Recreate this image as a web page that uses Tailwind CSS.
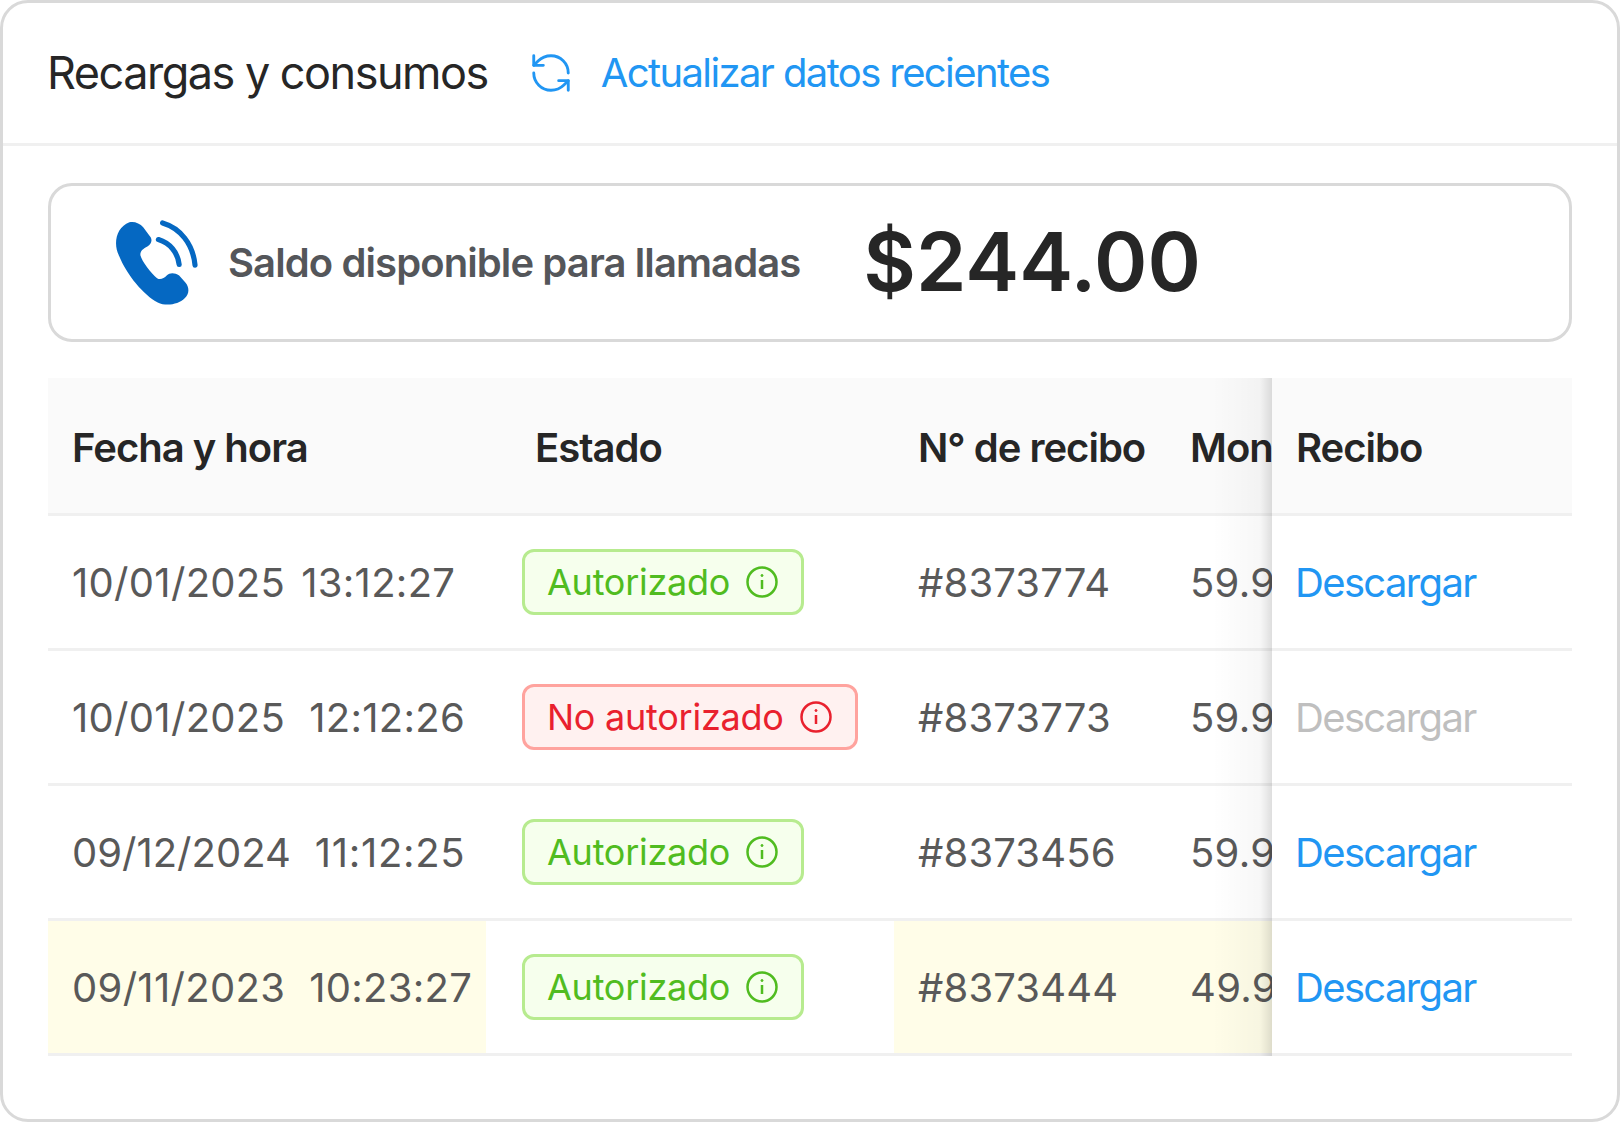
<!DOCTYPE html>
<html lang="es">
    <head>
        <meta charset="UTF-8">
        <title>Recargas y consumos</title>
        <script src="https://cdn.jsdelivr.net/npm/@tailwindcss/browser@4"></script>
    </head>
    <body class="bg-white font-['Inter','Liberation_Sans',sans-serif]">
        <section class="w-[1620px] h-[1122px] rounded-[28px] border-[3px] border-[#d9d9d9] bg-white overflow-hidden">

            <!-- header -->
            <header class="flex items-center h-[143px] pl-[44px] border-b-[3px] border-[#f0f0f0]">
                <h1 class="text-[45px] font-normal tracking-[-1.5px] text-[#262626]">Recargas y consumos</h1>
                <svg class="ml-[40px] w-[46px] h-[46px] text-[#2196f3]" viewBox="0 0 24 24" fill="none" stroke="currentColor" stroke-width="1.5" stroke-linecap="round" stroke-linejoin="round">
                    <path d="M21 12a9 9 0 0 0-9-9 9.75 9.75 0 0 0-6.74 2.74L3 8"/>
                    <path d="M3 3v5h5"/>
                    <path d="M3 12a9 9 0 0 0 9 9 9.75 9.75 0 0 0 6.74-2.74L21 16"/>
                    <path d="M16 16h5v5"/>
                </svg>
                <a class="ml-[27px] text-[40px] tracking-[-1.6px] text-[#2196f3]">Actualizar datos recientes</a>
            </header>

            <div class="px-[45px]">
                <!-- saldo -->
                <div class="flex items-center h-[159px] mt-[37px] pl-[62px] rounded-[24px] border-[3px] border-[#d9d9d9]">
                    <svg class="w-[114px] h-[104px] -ml-[14px] -mt-[4px]" viewBox="0 0 330 300" fill="#0568c2">
                        <path d="M88 38C100 34 118 40 128 52L150 82C155 92 150 102 140 108C128 114 118 122 120 134C124 150 150 185 168 200C178 206 188 200 196 192C206 182 220 184 232 192L250 212C262 226 262 245 248 258C230 276 195 282 170 270C130 250 80 190 58 135C40 100 50 52 88 38Z"/>
                        <path d="M172 88C205 98 228 125 232 160" fill="none" stroke="#0568c2" stroke-width="15" stroke-linecap="round"/>
                        <path d="M184 40C235 55 272 100 278 162" fill="none" stroke="#0568c2" stroke-width="15" stroke-linecap="round"/>
                    </svg>
                    <span class="ml-[15px] text-[40px] font-semibold tracking-[-0.9px] text-[#54565a]">Saldo disponible para llamadas</span>
                    <span class="ml-[63px] text-[81px] font-semibold text-[#262626]">$244.00</span>
                </div>

                <!-- tabla -->
                <div class="relative mt-[36px] text-[40px] text-[#595959] whitespace-nowrap">
                    <div class="grid grid-cols-[438px_408px_274px_104px_300px] h-[138px] items-center bg-[#fafafa] border-b-[3px] border-[#f0f0f0] font-semibold text-[#262626] tracking-[-1px]">
                        <div class="pl-[24px] pt-[4px]">Fecha y hora</div>
                        <div class="pl-[49px] pt-[4px]">Estado</div>
                        <div class="pl-[24px] pt-[4px]">N° de recibo</div>
                        <div class="pl-[22px] pt-[4px] overflow-hidden">Monto</div>
                        <div class="pl-[24px] pt-[4px]">Recibo</div>
                    </div>

                    <div class="grid grid-cols-[438px_408px_274px_104px_300px] h-[135px] items-center border-b-[3px] border-[#f0f0f0]">
                        <div class="pl-[24px] pt-[1px] flex gap-[16px] tracking-[0.3px]"><span>10/01/2025</span><span>13:12:27</span></div>
                        <div class="pl-[36px]">
                            <span class="inline-flex items-center gap-[16px] h-[66px] pl-[22px] pr-[23px] rounded-[12px] border-[3px] border-[#b7eb8f] bg-[#f6ffed] text-[36px] tracking-[-0.25px] text-[#50bc20]">Autorizado
                                <svg class="w-[32px] h-[32px]" viewBox="0 0 32 32" fill="none" stroke="currentColor" stroke-width="2.5"><circle cx="16" cy="16" r="14.5"/><path d="M16 14v9"/><circle cx="16" cy="9.5" r="1" fill="currentColor" stroke-width="1"/></svg>
                            </span>
                        </div>
                        <div class="pl-[24px] pt-[1px] tracking-[0.15px]">#8373774</div>
                        <div class="pl-[22px] pt-[1px] overflow-hidden tracking-[0.3px]">59.90</div>
                        <div class="pl-[23px] pt-[1px] tracking-[-1.65px] text-[#2196f3]">Descargar</div>
                    </div>

                    <div class="grid grid-cols-[438px_408px_274px_104px_300px] h-[135px] items-center border-b-[3px] border-[#f0f0f0]">
                        <div class="pl-[24px] pt-[1px] flex gap-[24px] tracking-[0.3px]"><span>10/01/2025</span><span>12:12:26</span></div>
                        <div class="pl-[36px]">
                            <span class="inline-flex items-center gap-[16px] h-[66px] pl-[22px] pr-[23px] rounded-[12px] border-[3px] border-[#ffa39e] bg-[#fff1f0] text-[36px] tracking-[-0.25px] text-[#e9212e]">No autorizado
                                <svg class="w-[32px] h-[32px]" viewBox="0 0 32 32" fill="none" stroke="currentColor" stroke-width="2.5"><circle cx="16" cy="16" r="14.5"/><path d="M16 14v9"/><circle cx="16" cy="9.5" r="1" fill="currentColor" stroke-width="1"/></svg>
                            </span>
                        </div>
                        <div class="pl-[24px] pt-[1px] tracking-[0.15px]">#8373773</div>
                        <div class="pl-[22px] pt-[1px] overflow-hidden tracking-[0.3px]">59.90</div>
                        <div class="pl-[23px] pt-[1px] tracking-[-1.65px] text-[#bfbfbf]">Descargar</div>
                    </div>

                    <div class="grid grid-cols-[438px_408px_274px_104px_300px] h-[135px] items-center border-b-[3px] border-[#f0f0f0]">
                        <div class="pl-[24px] pt-[1px] flex gap-[24px]"><span>09/12/2024</span><span class="tracking-[0.7px]">11:12:25</span></div>
                        <div class="pl-[36px]">
                            <span class="inline-flex items-center gap-[16px] h-[66px] pl-[22px] pr-[23px] rounded-[12px] border-[3px] border-[#b7eb8f] bg-[#f6ffed] text-[36px] tracking-[-0.25px] text-[#50bc20]">Autorizado
                                <svg class="w-[32px] h-[32px]" viewBox="0 0 32 32" fill="none" stroke="currentColor" stroke-width="2.5"><circle cx="16" cy="16" r="14.5"/><path d="M16 14v9"/><circle cx="16" cy="9.5" r="1" fill="currentColor" stroke-width="1"/></svg>
                            </span>
                        </div>
                        <div class="pl-[24px] pt-[1px] tracking-[0.15px]">#8373456</div>
                        <div class="pl-[22px] pt-[1px] overflow-hidden tracking-[0.3px]">59.90</div>
                        <div class="pl-[23px] pt-[1px] tracking-[-1.65px] text-[#2196f3]">Descargar</div>
                    </div>

                    <!-- fila resaltada -->
                    <div class="grid grid-cols-[438px_408px_274px_104px_300px] h-[135px] items-center border-b-[3px] border-[#f0f0f0]">
                        <div class="pl-[24px] pt-[1px] flex items-center gap-[24px] h-full bg-[#fffde8] tracking-[0.3px]"><span>09/11/2023</span><span>10:23:27</span></div>
                        <div class="pl-[36px]">
                            <span class="inline-flex items-center gap-[16px] h-[66px] pl-[22px] pr-[23px] rounded-[12px] border-[3px] border-[#b7eb8f] bg-[#f6ffed] text-[36px] tracking-[-0.25px] text-[#50bc20]">Autorizado
                                <svg class="w-[32px] h-[32px]" viewBox="0 0 32 32" fill="none" stroke="currentColor" stroke-width="2.5"><circle cx="16" cy="16" r="14.5"/><path d="M16 14v9"/><circle cx="16" cy="9.5" r="1" fill="currentColor" stroke-width="1"/></svg>
                            </span>
                        </div>
                        <div class="pl-[24px] pt-[1px] flex items-center h-full bg-[#fffde8] tracking-[0.15px]">#8373444</div>
                        <div class="pl-[22px] pt-[1px] flex items-center h-full overflow-hidden bg-[#fffde8] tracking-[0.3px]">49.90</div>
                        <div class="pl-[23px] pt-[1px] tracking-[-1.65px] text-[#2196f3]">Descargar</div>
                    </div>

                    <!-- sombra de la columna fija -->
                    <div class="absolute top-0 bottom-0 left-[1164px] w-[60px] bg-gradient-to-l from-black/[0.13] via-black/[0.03] via-20% to-transparent pointer-events-none"></div>
                </div>
            </div>
        </section>
    </body>
</html>
